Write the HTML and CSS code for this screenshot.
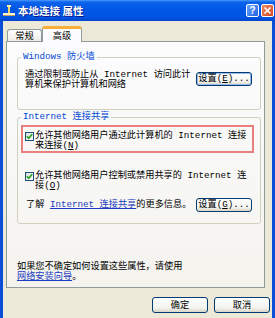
FILE: index.html
```html
<!DOCTYPE html>
<html lang="zh-CN">
<head>
<meta charset="utf-8">
<title>本地连接 属性</title>
<link rel="stylesheet" href="styles.css">
</head>
<body>
<div class="window">
  <div class="titlebar">
    <svg class="ticon" width="12" height="12" viewBox="0 0 12 12">
      <rect x="5" y="1" width="2" height="8" fill="#f3d36a"/>
      <rect x="4" y="0" width="4" height="2" fill="#fff3b0"/>
      <rect x="0" y="8" width="12" height="3" fill="#fff6d2"/>
      <rect x="0" y="10" width="12" height="1" fill="#b8a060"/>
    </svg>
    <span class="title">本地连接 属性</span>
    <div class="tbtns">
      <span class="tb help">?</span>
      <span class="tb close"><svg width="9" height="9" viewBox="0 0 9 9"><path d="M1.5 1.5L7.5 7.5M7.5 1.5L1.5 7.5" stroke="#fff" stroke-width="1.6"/></svg></span>
    </div>
  </div>
  <div class="body">
    <div class="tabs">
      <div class="tab">常规</div>
      <div class="tab active">高级</div>
    </div>
    <div class="panel">
      <fieldset class="group fw">
        <legend>Windows 防火墙</legend>
        <div class="fwrow">
          <p>通过限制或防止从 Internet 访问此计<br>算机来保护计算机和网络</p>
          <button class="btn focus">设置(<u>E</u>)...</button>
        </div>
      </fieldset>
      <fieldset class="group ics">
        <legend>Internet 连接共享</legend>
        <div class="hl">
          <div class="check">
            <span class="cb"><svg width="7" height="7" viewBox="0 0 7 7"><path d="M0.8 3.2L2.7 5.2L6.2 1.2" fill="none" stroke="#21a121" stroke-width="1.6"/></svg></span>
            <p>允许其他网络用户通过此计算机的 Internet 连接<br>来连接(<u>N</u>)</p>
          </div>
        </div>
        <div class="check second">
          <span class="cb"><svg width="7" height="7" viewBox="0 0 7 7"><path d="M0.8 3.2L2.7 5.2L6.2 1.2" fill="none" stroke="#21a121" stroke-width="1.6"/></svg></span>
          <p>允许其他网络用户控制或禁用共享的 Internet 连<br>接(<u>O</u>)</p>
        </div>
        <div class="info">
          <p>了解 <a href="#" class="link">Internet 连接共享</a>的更多信息。</p>
          <button class="btn">设置(<u>G</u>)...</button>
        </div>
      </fieldset>
      <p class="note">如果您不确定如何设置这些属性，请使用<br><a href="#" class="link">网络安装向导</a>。</p>
    </div>
    <div class="actions">
      <button class="btn big">确定</button>
      <button class="btn big">取消</button>
    </div>
  </div>
</div>
</body>
</html>
```
FILE: styles.css
```css
* { box-sizing: border-box; margin: 0; padding: 0; }
html, body { width: 275px; height: 318px; overflow: hidden; }
body {
  font: 9.2px/10px "Liberation Mono", "Noto Sans CJK SC", monospace;
  color: #000;
  background: #ece9d8;
}
.window { width: 275px; height: 318px; display: flex; flex-direction: column; }
.titlebar {
  height: 21px;
  display: flex;
  align-items: center;
  padding: 0 1px 0 3px;
  background: linear-gradient(180deg, #4a9cff 0%, #0d62ea 10%, #0057e6 45%, #0054e3 80%, #0046cf 100%);
}
.ticon { margin-right: 3px; flex: none; }
.title {
  font: bold 10.5px/12px "Noto Sans CJK SC", sans-serif;
  color: #fff;
  text-shadow: 1px 1px 0 #0a1a8a;
}
.tbtns { margin-left: auto; display: flex; gap: 2px; }
.tb {
  width: 13px; height: 13px;
  border: 1px solid #fff;
  border-radius: 2px;
  display: flex; align-items: center; justify-content: center;
  color: #fff;
}
.help {
  background: linear-gradient(135deg, #6aa3ff, #2462e0);
  font: bold 10px/1 "Liberation Sans", sans-serif;
}
.close { background: linear-gradient(135deg, #f08a63, #d2471d); }

.body {
  flex: 1;
  border-left: 3px solid #0b4fd9;
  border-right: 3px solid #0b4fd9;
  padding: 5px 7px 0 3px;
  display: flex;
  flex-direction: column;
}
.tabs {
  display: flex;
  align-items: flex-end;
  height: 16px;
  padding-left: 1px;
  margin-bottom: -1px;
}
.tab {
  width: 35px;
  height: 12px;
  margin-bottom: 1px;
  border: 1px solid #919b9c;
  border-bottom: none;
  border-radius: 3px 3px 0 0;
  background: linear-gradient(#fff, #ecebe5);
  text-align: center;
  line-height: 11px;
  font-family: "Noto Sans CJK SC", sans-serif;
}
.tab.active {
  width: 40px;
  height: 16px;
  margin-bottom: 0;
  border-top: 3px solid #f7b13b;
  background: #fcfcfe;
  position: relative;
  z-index: 1;
  line-height: 12px;
}
.panel {
  height: 247px;
  border: 1px solid #919b9c;
  background: linear-gradient(#fcfcfe, #f4f3ee);
  padding: 10px 3px 0 10px;
}
.group {
  border: 1px solid #d0d0bf;
  border-radius: 3px;
  padding: 0 8px 0 7px;
}
.group legend {
  margin-left: -4px;
  padding: 0 2px;
  color: #0046d5;
  line-height: 10px;
}
.fw { padding-bottom: 19px; }
.fwrow { display: flex; align-items: flex-start; margin-top: 8px; }
.fwrow .btn { margin-left: auto; margin-top: 2px; }

.btn {
  font: 9.2px/1 "Liberation Mono", "Noto Sans CJK SC", monospace;
  color: #000;
  width: 56px;
  height: 14px;
  border: 1px solid #003c74;
  border-radius: 3px;
  background: linear-gradient(#fff, #f3f3ef 70%, #d9d5c8);
  display: flex; align-items: center; justify-content: center;
}
.btn.focus { box-shadow: inset 0 0 0 1px #9ab8ea; }

.ics { margin-top: 2px; padding-bottom: 11px; }
.hl {
  margin: 3px -2px 0 -4px;
  border: 2px solid #e88080;
  padding: 4px 0 0 2px;
}
.check { display: flex; align-items: flex-start; }
.cb {
  width: 9px; height: 9px;
  margin: 1px 1px 0 0;
  flex: none;
  border: 1px solid #1c5180;
  background: linear-gradient(135deg, #dcdcd7, #fff);
  display: flex; align-items: center; justify-content: center;
}
.check.second { margin-top: 18px; }
.info { display: flex; align-items: center; margin-top: 7px; }
.info p { margin-left: 1px; }
.info .btn { margin-left: auto; }
.link { color: #1a3bc0; text-decoration: underline; }
.note { margin-top: 38px; }

.actions {
  display: flex;
  justify-content: flex-end;
  gap: 6px;
  margin-top: 9px;
  margin-right: -5px;
}
.btn.big { width: 56px; height: 16px; font-family: "Noto Sans CJK SC", sans-serif; }
```
